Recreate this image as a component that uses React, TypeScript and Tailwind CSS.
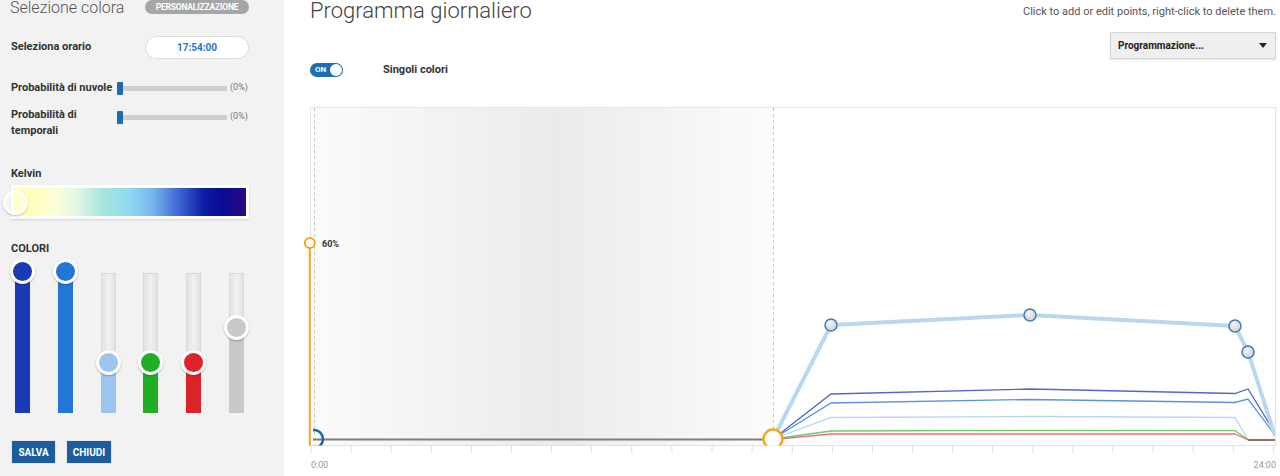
import React from "react";

const sliders = [
  { color: "#1a3bb5", thumb: 12 },
  { color: "#2476d6", thumb: 12 },
  { color: "#9dc6ef", thumb: 103 },
  { color: "#20ae24", thumb: 103 },
  { color: "#dc2328", thumb: 103 },
  { color: "#c9c9c9", thumb: 68 },
];

const ticks = Array.from({ length: 25 }, (_, i) => 311 + i * 40.1);

function HSlider() {
  return (
    <div className="flex items-center h-[16px]">
      <div className="w-[6px] h-[13px] bg-[#1e6bb0] rounded-[1px]" />
      <div className="w-[104px] h-[5px] bg-[#cecece]" />
      <span className="ml-[3px] text-[9px] text-[#777]">(0%)</span>
    </div>
  );
}

function VSlider({ color, thumb }: { color: string; thumb: number }) {
  return (
    <div className="relative w-[25px] h-[154px]">
      <div className="absolute left-[5px] top-[14px] w-[15px] h-[140px] bg-[linear-gradient(to_right,#e2e2e2,#f0f0f0_50%,#e2e2e2)] border border-[#d9d9d9]" />
      <div
        className="absolute left-[5px] bottom-0 w-[15px]"
        style={{ top: thumb, backgroundColor: color }}
      />
      <div
        className="absolute left-0 w-[25px] h-[25px] rounded-full border-[3px] border-white shadow-[0_1px_2px_rgba(0,0,0,0.25)]"
        style={{ top: thumb - 12.5, backgroundColor: color }}
      />
    </div>
  );
}

function Chart() {
  const thick = "773,439 831,325 1030,315 1235,326 1248,352 1275,436";
  const lines = [
    { c: "#5366cc", p: "773,439 831,394 1030,389 1235,393.5 1248,389 1275,433" },
    { c: "#5b93e0", p: "773,439 831,403 1030,399.5 1235,402.5 1248,399 1275,435" },
    { c: "#b6d6f3", p: "773,439 831,417.5 1030,416.5 1235,417.5 1248,439.5" },
    { c: "#6fcc6f", p: "773,439 831,431 1030,430.3 1235,430.7 1248,439.5" },
    { c: "#e97272", p: "773,439.5 831,434 1030,434 1235,434 1248,440" },
  ];
  const points = [
    [831, 325],
    [1030, 315],
    [1235, 326],
    [1248, 352],
  ];
  return (
    <svg width={966} height={369} viewBox="310 107 966 369" className="overflow-visible">
      <defs>
        <linearGradient id="band" x1="0" x2="1" y1="0" y2="0">
          <stop offset="0" stopColor="#fbfbfb" />
          <stop offset="0.53" stopColor="#ebebeb" />
          <stop offset="1" stopColor="#fcfcfc" />
        </linearGradient>
        <radialGradient id="pt" cx="0.4" cy="0.35" r="0.7">
          <stop offset="0" stopColor="#f6f6f6" />
          <stop offset="1" stopColor="#cdcdcd" />
        </radialGradient>
        <clipPath id="plot">
          <rect x={313} y={108} width={962} height={337.5} />
        </clipPath>
      </defs>
      <rect x={310.5} y={107.5} width={965} height={338} fill="#fff" stroke="#e4e4e4" />
      <rect x={314} y={108} width={459} height={337} fill="url(#band)" />
      <line x1={314.5} y1={108} x2={314.5} y2={445} stroke="#c4c4c4" strokeDasharray="3 3" />
      <line x1={773.5} y1={108} x2={773.5} y2={445} stroke="#c4c4c4" strokeDasharray="3 3" />
      <line x1={310} y1={445.5} x2={1276} y2={445.5} stroke="#e2e2e2" />
      {ticks.map((x) => (
        <line key={x} x1={x} y1={446} x2={x} y2={453} stroke="#dedede" />
      ))}
      <g clipPath="url(#plot)">
        <line x1={313} y1={439.5} x2={772} y2={439.5} stroke="#7d7d7d" strokeWidth={2} />
        {lines.map((l) => (
          <polyline key={l.c} points={l.p} fill="none" stroke={l.c} strokeWidth={1.3} />
        ))}
        <line x1={1248} y1={440} x2={1276} y2={440} stroke="#7a3a30" strokeWidth={1.5} />
        <polyline points={thick} fill="none" stroke="#b8d8ef" strokeWidth={4} strokeLinejoin="round" />
        <circle cx={314} cy={439} r={9} fill="none" stroke="#1766b3" strokeWidth={2.5} />
        <circle cx={773} cy={439} r={9.5} fill="#fff" stroke="#f6a623" strokeWidth={2.5} />
      </g>
      {points.map(([x, y]) => (
        <circle key={x} cx={x} cy={y} r={6} fill="url(#pt)" stroke="#3d7dbd" strokeWidth={1.5} />
      ))}
      <line x1={309.8} y1={248} x2={309.8} y2={446} stroke="#f6a623" strokeWidth={2} />
      <circle cx={309.8} cy={243} r={5} fill="#fff" stroke="#f6a623" strokeWidth={2} />
      <text x={322} y={246.5} fontSize={9} fontWeight={700} fill="#333" fontFamily="Roboto, sans-serif">
        60%
      </text>
      <text x={311} y={467.5} fontSize={9} fill="#999" fontFamily="Roboto, sans-serif">
        0:00
      </text>
      <text x={1276} y={468} fontSize={9} fill="#999" textAnchor="end" fontFamily="Roboto, sans-serif">
        24:00
      </text>
    </svg>
  );
}

export default function App() {
  return (
    <div className="flex w-[1280px] h-[476px] overflow-hidden bg-white font-['Roboto',sans-serif]">
      {/* left panel */}
      <aside className="w-[284px] h-full shrink-0 bg-[#f2f2f2] pl-[11px] pr-[35px] flex flex-col">
        <div className="h-[16px] flex items-center justify-between">
          <span className="text-[16px] font-light text-[#555] leading-[16px] -ml-[1px]">
            Selezione colora
          </span>
          <span className="w-[104px] h-[14px] -mt-[2px] rounded-full bg-[#a6a6a6] text-white text-[8.5px] font-bold flex items-center justify-center tracking-[-0.2px]">
            PERSONALIZZAZIONE
          </span>
        </div>

        <div className="mt-[20px] h-[23px] flex items-center justify-between">
          <span className="text-[11px] font-bold text-[#333]">Seleziona orario</span>
          <div className="w-[104px] h-[23px] rounded-full bg-white border border-[#dcdcdc] flex items-center justify-center text-[10px] font-bold text-[#2a72d4]">
            17:54:00
          </div>
        </div>

        <div className="mt-[21px] flex items-center">
          <span className="w-[106px] text-[11px] font-bold text-[#333] leading-[16px]">
            Probabilità di nuvole
          </span>
          <HSlider />
        </div>

        <div className="mt-[11px] flex items-start">
          <span className="w-[106px] text-[11px] font-bold text-[#333] leading-[16px]">
            Probabilità di temporali
          </span>
          <div className="mt-[2px]">
            <HSlider />
          </div>
        </div>

        <div className="mt-[27px] text-[11px] font-bold text-[#333] leading-[16px]">Kelvin</div>
        <div className="relative mt-[3px] h-[34px] border-[3px] border-white shadow-[0_1px_2px_rgba(0,0,0,0.15)]">
          <div className="h-full bg-[linear-gradient(to_right,#ffffa8_0%,#fdfed8_18%,#e2f6e4_27%,#a9e5de_38%,#8fd8f2_50%,#76b4ee_60%,#3a5fd0_72%,#0c1ca3_82%,#0a0a96_90%,#2b0a80_100%)]" />
          <div className="absolute -left-[11px] top-[2px] w-[25px] h-[25px] rounded-full border-[3px] border-white bg-[rgba(255,255,255,0.35)] shadow-[0_1px_2px_rgba(0,0,0,0.25)]" />
        </div>

        <div className="mt-[22px] text-[11px] font-bold text-[#333] leading-[16px]">COLORI</div>
        <div className="mt-[2px] -ml-[1px] flex gap-[18px]">
          {sliders.map((s, i) => (
            <VSlider key={i} color={s.color} thumb={s.thumb} />
          ))}
        </div>

        <div className="mt-[27px] flex gap-[10px]">
          <button className="w-[45px] h-[24px] bg-[#1d5d9d] text-white text-[10px] font-bold border border-[#e6e6e6]">
            SALVA
          </button>
          <button className="w-[46px] h-[24px] bg-[#1d5d9d] text-white text-[10px] font-bold border border-[#e6e6e6]">
            CHIUDI
          </button>
        </div>
      </aside>

      {/* main */}
      <main className="flex-1 pl-[26px] pr-[4px] flex flex-col">
        <div className="h-[24px] flex items-start justify-between">
          <h1 className="text-[22px] font-light text-[#444] leading-[22px]">
            Programma giornaliero
          </h1>
          <span className="mt-[5px] text-[11px] leading-[14px] text-[#555]">
            Click to add or edit points, right-click to delete them.
          </span>
        </div>

        <div className="mt-[8px] self-end w-[166px] h-[27px] bg-[#efefef] border border-[#d6d6d6] shadow-[0_1px_2px_rgba(0,0,0,0.12)] flex items-center justify-between pl-[7px] pr-[8px]">
          <span className="text-[10px] font-bold text-[#222]">Programmazione...</span>
          <svg width="8" height="5" viewBox="0 0 8 5">
            <path d="M0 0 L8 0 L4 5 Z" fill="#222" />
          </svg>
        </div>

        <div className="mt-[4px] h-[14px] flex items-center">
          <div className="relative w-[33px] h-[14px] rounded-full bg-[#1e6fb2]">
            <span className="absolute left-[5px] top-0 leading-[14px] text-[8px] font-bold text-white">ON</span>
            <div className="absolute right-[1px] top-[1px] w-[12px] h-[12px] rounded-full bg-white" />
          </div>
          <span className="ml-[40px] text-[11px] font-bold text-[#333]">Singoli colori</span>
        </div>

        <div className="mt-[30px]">
          <Chart />
        </div>
      </main>
    </div>
  );
}
